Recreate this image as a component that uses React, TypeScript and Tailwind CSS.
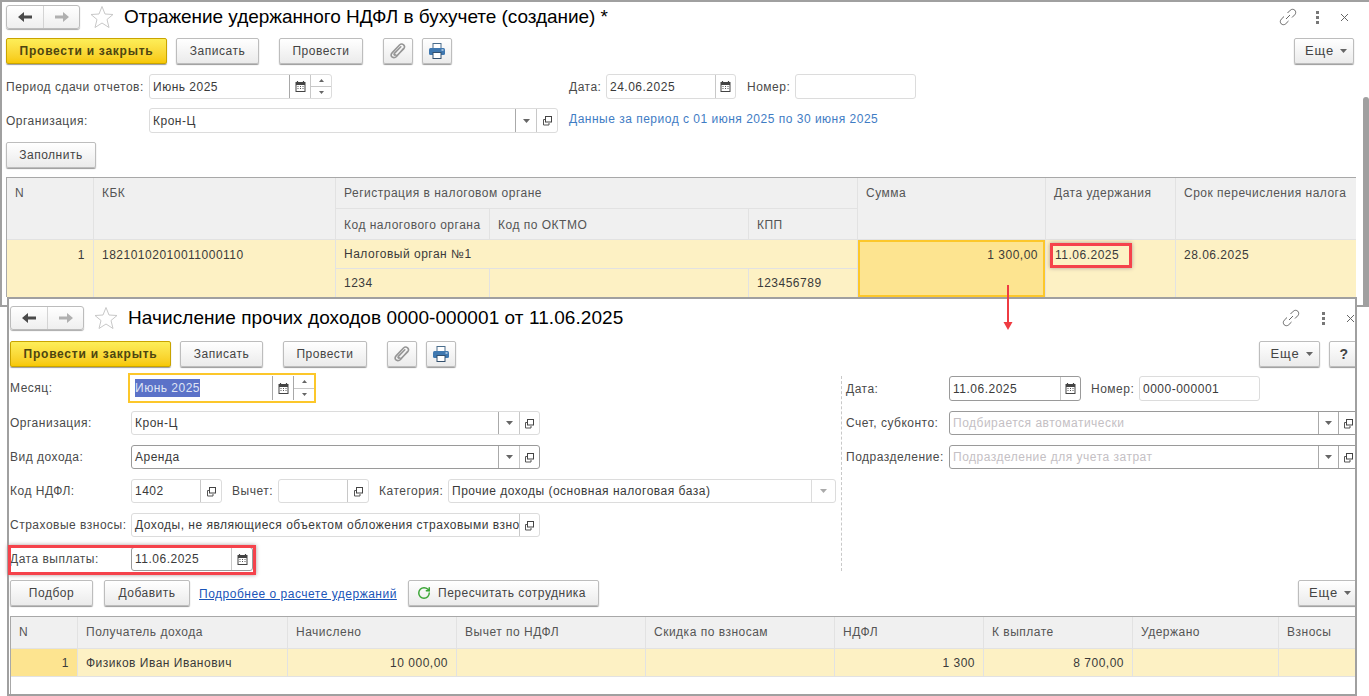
import React from "react";
import { RotateCw } from "lucide-react";

const Back = () => (
  <svg width="14" height="10" viewBox="0 0 14 10"><path d="M0 5 L6 0 V3.5 H14 V6.5 H6 V10 Z" fill="#4a4a4a" /></svg>
);
const Fwd = () => (
  <svg width="14" height="10" viewBox="0 0 14 10"><path d="M14 5 L8 0 V3.5 H0 V6.5 H8 V10 Z" fill="#b0b0b0" /></svg>
);
const Star = () => (
  <svg width="24" height="24" viewBox="0 0 24 24"><path d="M12 1.5 L15 9 L23 9.5 L17 14.5 L19 22.5 L12 18 L5 22.5 L7 14.5 L1 9.5 L9 9 Z" fill="#fff" stroke="#c8c8c8" strokeWidth="1" /></svg>
);
const Clip = () => (
  <svg width="18" height="18" viewBox="0 0 18 18" fill="none" stroke="#969696" strokeWidth="1.6" strokeLinecap="round"><path d="M14.5 6.5 L7.5 14.5 C6 16 3.6 15.8 2.8 14.8 C1.8 13.6 2 12 3.3 10.6 L10.5 3 C11.8 1.8 13.4 1.8 14.6 2.9 C15.8 4.1 15.8 5.6 14.6 6.9 L7.6 14 M11.8 4.8 L5.4 11.4 C4.5 12.5 5.5 13.6 6.6 12.8" /></svg>
);
const Printer = () => (
  <svg width="18" height="18" viewBox="0 0 18 18"><rect x="5" y="1.5" width="8" height="5" fill="#fff" stroke="#4a6d8c" /><rect x="1" y="6" width="16" height="7" rx="1.5" fill="#3f78b0" /><rect x="5" y="10.5" width="8" height="6" fill="#fff" stroke="#33506e" /><rect x="13.5" y="7.5" width="2" height="1" fill="#fff" /></svg>
);
const Cal = () => (
  <svg width="11" height="11" viewBox="0 0 11 11"><path d="M2.5 0v2M8.5 0v2" stroke="#444" strokeWidth="1.2" /><rect x="1" y="1.5" width="9" height="9" fill="#fff" stroke="#444" /><rect x="1" y="1.5" width="9" height="2.5" fill="#444" /><path d="M2.5 5.5h1M5 5.5h1M7.5 5.5h1M2.5 7.5h1M5 7.5h1M7.5 7.5h1" stroke="#555" /></svg>
);
const Open = () => (
  <svg width="11" height="11" viewBox="0 0 11 11" fill="none" stroke="#555"><path d="M3.5 4.5H1.5V10H7V8" /><rect x="3.5" y="1.5" width="6" height="5.5" stroke="#444" /></svg>
);
const Tri = ({ light }: { light?: boolean }) => (
  <svg width="7" height="4" viewBox="0 0 7 4"><path d="M0 0h7L3.5 4z" fill={light ? "#aaa" : "#666"} /></svg>
);
const Chain = () => (
  <svg width="18" height="18" viewBox="0 0 18 18" fill="none" stroke="#666" strokeWidth="1"><path d="M7 11 L11 7" /><path d="M8.5 5 L11.3 2.2 C12.6 1 14.5 1 15.8 2.2 C17 3.5 17 5.4 15.8 6.7 L13 9.5" /><path d="M9.5 13 L6.7 15.8 C5.4 17 3.5 17 2.2 15.8 C1 14.5 1 12.6 2.2 11.3 L5 8.5" /></svg>
);
const Dots = () => (
  <span className="flex flex-col gap-[2px]">
    <span className="h-[3px] w-[3px] bg-[#777]" />
    <span className="h-[3px] w-[3px] bg-[#777]" />
    <span className="h-[3px] w-[3px] bg-[#777]" />
  </span>
);
const Cross = () => (
  <svg width="9" height="9" viewBox="0 0 9 9" stroke="#666" strokeWidth="1"><path d="M1 1l7 7M8 1l-7 7" /></svg>
);

const Btn = ({ className, children }: { className: string; children: React.ReactNode }) => (
  <div className={`flex h-[26px] shrink-0 items-center justify-center rounded-[2px] border border-[#bdbdbd] bg-linear-to-b from-white to-[#ebebeb] text-[#444] shadow-[0_1px_1px_#9a9a9a] ${className}`}>
    {children}
  </div>
);
const More = ({ className }: { className: string }) => (
  <Btn className={`gap-[6px] pl-[4px] ${className}`}>
    <span className="text-[13px] tracking-[0.9px]">Еще</span>
    <Tri />
  </Btn>
);
const Primary = () => (
  <div className="flex h-[26px] w-[161px] shrink-0 items-center justify-center rounded-[2px] border border-[#c9a400] bg-linear-to-b from-[#fdee58] to-[#f7c800] font-bold tracking-[0.75px] text-[#4d4510] shadow-[0_1px_1px_#9a9a9a]">
    Провести и закрыть
  </div>
);
const Nav = () => (
  <div className="flex h-[24px] w-[74px] shrink-0 rounded-[3px] border border-[#bcbcbc] bg-linear-to-b from-white to-[#efefef] shadow-[0_1px_1px_#aaa]">
    <div className="flex w-[37px] items-center justify-center border-r border-[#d4d4d4]"><Back /></div>
    <div className="flex flex-1 items-center justify-center"><Fwd /></div>
  </div>
);
const Seg = ({ className, children }: { className: string; children: React.ReactNode }) => (
  <div className={`flex shrink-0 items-center justify-center self-stretch border-l ${className}`}>{children}</div>
);
const Field = ({ className, children }: { className: string; children?: React.ReactNode }) => (
  <div className={`flex shrink-0 items-center overflow-hidden bg-white ${className}`}>{children}</div>
);
const Val = ({ children, muted }: { children?: React.ReactNode; muted?: boolean }) => (
  <div className={`min-w-0 flex-1 overflow-hidden whitespace-nowrap pl-[3px] ${muted ? "text-[#c4c0c4]" : "text-[#3a3a3a]"}`}>{children}</div>
);
const Spin = ({ className }: { className: string }) => (
  <div className={`flex w-[21px] shrink-0 flex-col self-stretch border-l ${className}`}>
    <div className="flex flex-1 items-center justify-center border-b border-[#c8c8c8]"><svg width="5" height="3" viewBox="0 0 5 3"><path d="M0 3h5L2.5 0z" fill="#666" /></svg></div>
    <div className="flex flex-1 items-center justify-center"><svg width="5" height="3" viewBox="0 0 5 3"><path d="M0 0h5L2.5 3z" fill="#666" /></svg></div>
  </div>
);
const Head = ({ className = "", children }: { className?: string; children?: React.ReactNode }) => (
  <div className={`whitespace-nowrap bg-[#f0f0f0] pl-[8px] text-[#555] ${className}`}>{children}</div>
);
const Cell = ({ className = "", children }: { className?: string; children?: React.ReactNode }) => (
  <div className={`flex whitespace-nowrap text-[#3a3a3a] ${className}`}>{children}</div>
);
const Label = ({ className, children }: { className: string; children: React.ReactNode }) => (
  <div className={`shrink-0 whitespace-nowrap text-[#4a4a4a] ${className}`}>{children}</div>
);
const IconBtn = ({ children }: { children: React.ReactNode }) => <Btn className="w-[30px]">{children}</Btn>;

export default function App() {
  return (
    <div className="relative h-[696px] w-[1369px] overflow-hidden bg-white font-['Liberation_Sans',Arial,sans-serif] text-[12px] tracking-[0.5px]">
      {/* first window */}
      <div className="absolute left-0 top-0 h-[307px] w-[1369px] border-b-2 border-l-2 border-t-2 border-[#a0a0a0] pl-[4px]">
        <div className="mt-[3px] flex h-[24px] items-center">
          <Nav />
          <div className="ml-[10px]"><Star /></div>
          <div className="ml-[10px] whitespace-nowrap text-[19px] tracking-[-0.05px] text-black">Отражение удержанного НДФЛ в бухучете (создание) *</div>
          <div className="ml-auto mr-[20px] flex items-center">
            <Chain />
            <div className="ml-[19px]"><Dots /></div>
            <div className="ml-[21px]"><Cross /></div>
          </div>
        </div>
        <div className="mt-[9px] flex items-center">
          <Primary />
          <Btn className="ml-[9px] w-[83px]">Записать</Btn>
          <Btn className="ml-[20px] w-[84px]">Провести</Btn>
          <div className="ml-[20px]"><IconBtn><Clip /></IconBtn></div>
          <div className="ml-[9px]"><IconBtn><Printer /></IconBtn></div>
          <More className="ml-[842px] w-[60px]" />
        </div>
        <div className="mt-[10px] flex items-center">
          <Label className="w-[143px]">Период сдачи отчетов:</Label>
          <Field className="h-[25px] w-[183px] rounded-[3px] border border-[#dcdcdc]">
            <Val>Июнь 2025</Val>
            <Seg className="w-[21px] border-[#a8a8a8]"><Cal /></Seg>
            <Spin className="border-[#c8c8c8]" />
          </Field>
          <Label className="ml-[237px] w-[37px]">Дата:</Label>
          <Field className="h-[25px] w-[130px] rounded-[3px] border border-[#dcdcdc]">
            <Val>24.06.2025</Val>
            <Seg className="w-[20px] border-[#c8c8c8]"><Cal /></Seg>
          </Field>
          <Label className="ml-[11px] w-[48px]">Номер:</Label>
          <Field className="h-[25px] w-[121px] rounded-[3px] border border-[#dcdcdc]" />
        </div>
        <div className="mt-[9px] flex items-center">
          <Label className="w-[143px]">Организация:</Label>
          <Field className="h-[25px] w-[409px] rounded-[3px] border border-[#dcdcdc]">
            <Val>Крон-Ц</Val>
            <Seg className="w-[21px] border-[#aaa]"><Tri /></Seg>
            <Seg className="w-[21px] border-[#c8c8c8]"><Open /></Seg>
          </Field>
          <div className="ml-[11px] mb-[4px] whitespace-nowrap text-[#3f7cc4]">Данные за период с 01 июня 2025 по 30 июня 2025</div>
        </div>
        <Btn className="mt-[9px] w-[90px]">Заполнить</Btn>
        <div className="mt-[9px] w-[1350px] border-l border-t border-[#a8a8a8] bg-white">
          <div className="grid grid-cols-[86px_241px_153px_258px_108px_187px_129px_180px] grid-rows-[30px_30px_28px_28px] gap-px bg-[#e2e2e2]">
            <Head className="row-span-2 pt-[6px]">N</Head>
            <Head className="row-span-2 pt-[6px]">КБК</Head>
            <Head className="col-span-3 pt-[6px]">Регистрация в налоговом органе</Head>
            <Head className="row-span-2 pt-[6px]">Сумма</Head>
            <Head className="row-span-2 pt-[6px]">Дата удержания</Head>
            <Head className="row-span-2 pt-[6px]">Срок перечисления налога</Head>
            <Head className="pt-[7px]">Код налогового органа</Head>
            <Head className="pt-[7px]">Код по ОКТМО</Head>
            <Head className="pt-[7px]">КПП</Head>
            <Cell className="row-span-2 items-start justify-end bg-[#fdf1c4] pr-[8px] pt-[6px]">1</Cell>
            <Cell className="row-span-2 items-start bg-[#fdf1c4] pl-[8px] pt-[6px]">18210102010011000110</Cell>
            <Cell className="col-span-3 items-center bg-[#fdf1c4] pl-[8px]">Налоговый орган №1</Cell>
            <Cell className="row-span-2 items-start justify-end border-2 border-[#fcc72a] bg-[#fde490] pr-[5px] pt-[4px]">1 300,00</Cell>
            <Cell className="row-span-2 items-start bg-[#fdf1c4] pl-[9px] pt-[6px]">11.06.2025</Cell>
            <Cell className="row-span-2 items-start bg-[#fdf1c4] pl-[8px] pt-[6px]">28.06.2025</Cell>
            <Cell className="items-center bg-[#fdf1c4] pl-[8px]">1234</Cell>
            <Cell className="bg-[#fdf1c4]" />
            <Cell className="items-center bg-[#fdf1c4] pl-[8px]">123456789</Cell>
          </div>
        </div>
      </div>
      <div className="absolute left-[1363px] top-[97px] h-[210px] w-[6px] rounded-t-[3px] bg-[#a0a0a0]" />

      {/* second window */}
      <div className="absolute left-[7px] top-[297px] h-[399px] w-[1350px] overflow-hidden border-2 border-[#a0a0a0] bg-white pl-px">
        <div className="mt-[7px] flex h-[24px] items-center">
          <Nav />
          <div className="ml-[10px]"><Star /></div>
          <div className="ml-[10px] whitespace-nowrap text-[19px] tracking-[0.07px] text-black">Начисление прочих доходов 0000-000001 от 11.06.2025</div>
          <div className="ml-auto flex items-center">
            <Chain />
            <div className="ml-[22px]"><Dots /></div>
            <div className="ml-[21px]"><Cross /></div>
          </div>
        </div>
        <div className="mt-[11px] flex items-center">
          <Primary />
          <Btn className="ml-[9px] w-[83px]">Записать</Btn>
          <Btn className="ml-[20px] w-[84px]">Провести</Btn>
          <div className="ml-[20px]"><IconBtn><Clip /></IconBtn></div>
          <div className="ml-[9px]"><IconBtn><Printer /></IconBtn></div>
          <More className="ml-[803px] w-[61px]" />
          <Btn className="ml-[9px] w-[30px] text-[14px] font-bold">?</Btn>
        </div>
        <div className="mt-[6px] flex h-[198px]">
          <div className="w-[831px] shrink-0">
            <div className="flex items-center">
              <Label className="w-[118px]">Месяц:</Label>
              <Field className="h-[30px] w-[188px] border-2 border-[#fcc72a]">
                <div className="flex min-w-0 flex-1 items-center pl-[5px]"><span className="bg-[#5b72c8] text-[#dfe4f4]">Июнь 2025</span></div>
                <Seg className="my-px w-[21px] border-[#a8a8a8]"><Cal /></Seg>
                <Spin className="my-px border-[#a8a8a8]" />
              </Field>
            </div>
            <div className="mt-[8px] flex items-center">
              <Label className="w-[121px]">Организация:</Label>
              <Field className="h-[24px] w-[409px] rounded-[3px] border border-[#dcdcdc]">
                <Val>Крон-Ц</Val>
                <Seg className="w-[21px] border-[#aaa]"><Tri /></Seg>
                <Seg className="w-[20px] border-[#c8c8c8]"><Open /></Seg>
              </Field>
            </div>
            <div className="mt-[10px] flex items-center">
              <Label className="w-[121px]">Вид дохода:</Label>
              <Field className="h-[24px] w-[409px] rounded-[3px] border border-[#9a9a9a]">
                <Val>Аренда</Val>
                <Seg className="w-[21px] border-[#aaa]"><Tri /></Seg>
                <Seg className="w-[20px] border-[#c8c8c8]"><Open /></Seg>
              </Field>
            </div>
            <div className="mt-[10px] flex items-center">
              <Label className="w-[121px]">Код НДФЛ:</Label>
              <Field className="h-[24px] w-[91px] rounded-[3px] border border-[#dcdcdc]">
                <Val>1402</Val>
                <Seg className="w-[21px] border-[#c8c8c8]"><Open /></Seg>
              </Field>
              <Label className="ml-[10px] w-[46px]">Вычет:</Label>
              <Field className="h-[24px] w-[91px] rounded-[3px] border border-[#dcdcdc]">
                <Val />
                <Seg className="w-[21px] border-[#c8c8c8]"><Open /></Seg>
              </Field>
              <Label className="ml-[10px] w-[69px]">Категория:</Label>
              <Field className="h-[24px] w-[388px] rounded-[3px] border border-[#dcdcdc]">
                <Val>Прочие доходы (основная налоговая база)</Val>
                <Seg className="w-[24px] border-[#dcdcdc]"><Tri light /></Seg>
              </Field>
            </div>
            <div className="mt-[10px] flex items-center">
              <Label className="w-[121px]">Страховые взносы:</Label>
              <Field className="h-[24px] w-[409px] rounded-[3px] border border-[#dcdcdc]">
                <Val>Доходы, не являющиеся объектом обложения страховыми взносами</Val>
                <Seg className="w-[20px] border-[#c8c8c8]"><Open /></Seg>
              </Field>
            </div>
            <div className="mt-[10px] flex items-center">
              <Label className="w-[121px]">Дата выплаты:</Label>
              <Field className="h-[24px] w-[122px] rounded-[3px] border border-[#9a9a9a]">
                <Val>11.06.2025</Val>
                <Seg className="w-[21px] border-[#c8c8c8]"><Cal /></Seg>
              </Field>
            </div>
          </div>
          <div className="mt-[3px] h-[195px] border-l border-dashed border-[#c8c8c8]" />
          <div className="ml-[4px] flex-1 pt-[3px]">
            <div className="flex items-center">
              <Label className="w-[103px]">Дата:</Label>
              <Field className="h-[25px] w-[132px] rounded-[3px] border border-[#9a9a9a]">
                <Val>11.06.2025</Val>
                <Seg className="w-[20px] border-[#c8c8c8]"><Cal /></Seg>
              </Field>
              <Label className="ml-[10px] w-[48px]">Номер:</Label>
              <Field className="h-[25px] w-[121px] rounded-[3px] border border-[#dcdcdc]"><Val>0000-000001</Val></Field>
            </div>
            <div className="mt-[10px] flex items-center">
              <Label className="w-[103px]">Счет, субконто:</Label>
              <Field className="h-[24px] w-[410px] rounded-[3px] border border-[#9a9a9a]">
                <Val muted>Подбирается автоматически</Val>
                <Seg className="w-[20px] border-[#aaa]"><Tri /></Seg>
                <Seg className="w-[20px] border-[#aaa]"><Open /></Seg>
              </Field>
            </div>
            <div className="mt-[10px] flex items-center">
              <Label className="w-[103px]">Подразделение:</Label>
              <Field className="h-[24px] w-[410px] rounded-[3px] border border-[#9a9a9a]">
                <Val muted>Подразделение для учета затрат</Val>
                <Seg className="w-[20px] border-[#aaa]"><Tri /></Seg>
                <Seg className="w-[20px] border-[#aaa]"><Open /></Seg>
              </Field>
            </div>
          </div>
        </div>
        <div className="mt-[9px] flex items-center">
          <Btn className="w-[83px]">Подбор</Btn>
          <Btn className="ml-[11px] w-[86px]">Добавить</Btn>
          <div className="ml-[9px] mt-[2px] w-[198px] shrink-0 whitespace-nowrap text-[#1a55b8] underline">Подробнее о расчете удержаний</div>
          <Btn className="ml-[11px] w-[191px] justify-start gap-[7px] pl-[8px]"><RotateCw size={14} strokeWidth={2.5} color="#3aa535" />Пересчитать сотрудника</Btn>
          <More className="ml-[699px] w-[60px]" />
        </div>
        <div className="mt-[10px] h-[80px] w-[1347px] border-l border-t border-[#a8a8a8]">
          <div className="grid grid-cols-[66px_209px_168px_188px_188px_148px_148px_145px_77px] grid-rows-[31px_27px] gap-px border-b border-[#e2e2e2] bg-[#e2e2e2]">
            <Head className="pt-[6px]">N</Head>
            <Head className="pt-[6px]">Получатель дохода</Head>
            <Head className="pt-[6px]">Начислено</Head>
            <Head className="pt-[6px]">Вычет по НДФЛ</Head>
            <Head className="pt-[6px]">Скидка по взносам</Head>
            <Head className="pt-[6px]">НДФЛ</Head>
            <Head className="pt-[6px]">К выплате</Head>
            <Head className="pt-[6px]">Удержано</Head>
            <Head className="pt-[6px]">Взносы</Head>
            <Cell className="items-center justify-end bg-[#fde490] pr-[8px]">1</Cell>
            <Cell className="items-center bg-[#fdf1c4] pl-[8px]">Физиков Иван Иванович</Cell>
            <Cell className="items-center justify-end bg-[#fdf1c4] pr-[8px]">10 000,00</Cell>
            <Cell className="bg-[#fdf1c4]" />
            <Cell className="bg-[#fdf1c4]" />
            <Cell className="items-center justify-end bg-[#fdf1c4] pr-[8px]">1 300</Cell>
            <Cell className="items-center justify-end bg-[#fdf1c4] pr-[8px]">8 700,00</Cell>
            <Cell className="bg-[#fdf1c4]" />
            <Cell className="bg-[#fdf1c4]" />
          </div>
        </div>
      </div>

      {/* annotations */}
      <div className="absolute left-[1050px] top-[243px] h-[25px] w-[82px] border-[3px] border-[#f5424b] shadow-[0_0_4px_#a99]" />
      <div className="absolute left-[8px] top-[545px] h-[30px] w-[248px] border-[3px] border-[#f5424b] shadow-[0_0_4px_#a99]" />
      <svg className="absolute left-[1003px] top-[285px]" width="10" height="46" viewBox="0 0 10 46">
        <rect x="4" y="0" width="2" height="40" fill="#ef3b42" />
        <path d="M0.5 37h9L5 45z" fill="#ef3b42" />
      </svg>
    </div>
  );
}
